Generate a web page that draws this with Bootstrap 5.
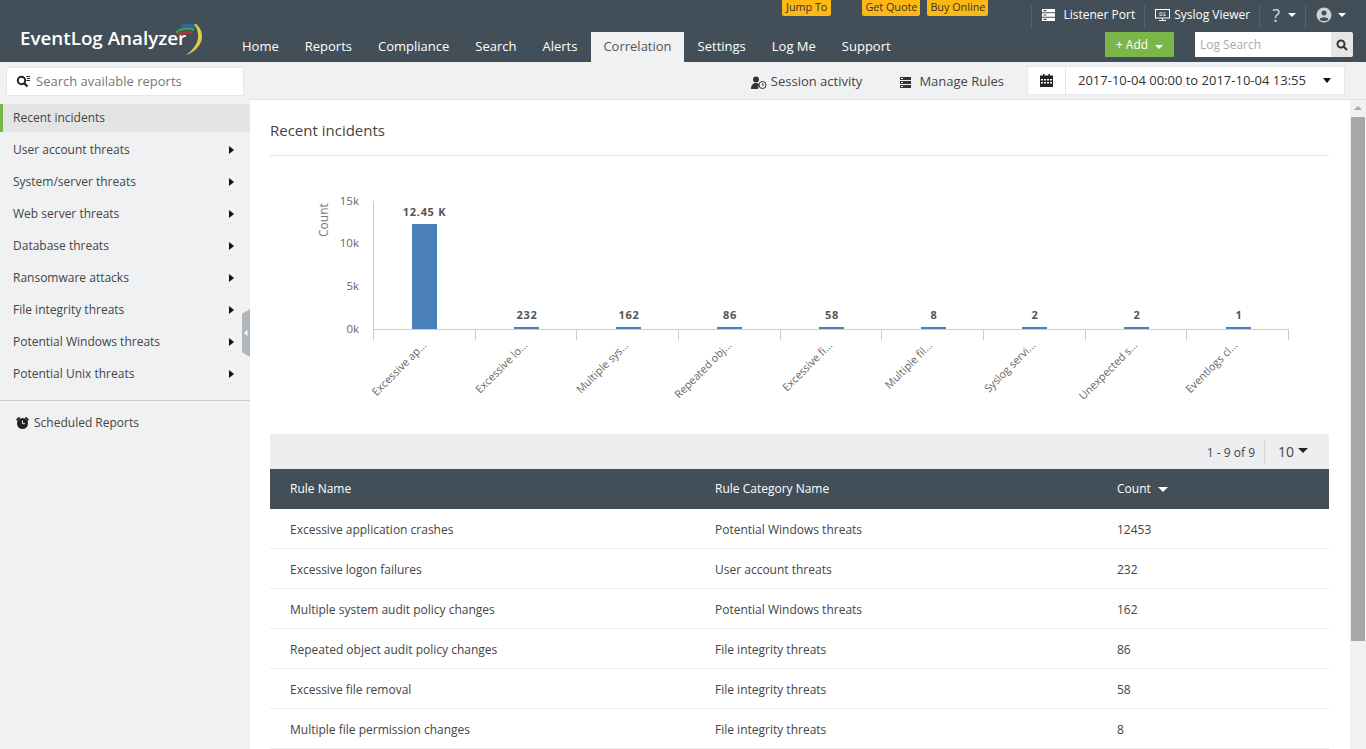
<!DOCTYPE html>
<html lang="en"><head><meta charset="utf-8"><title>EventLog Analyzer</title>
<link href="https://cdn.jsdelivr.net/npm/bootstrap@5.3.0/dist/css/bootstrap.min.css" rel="stylesheet">
<style>
html,body{height:100%;overflow:hidden}
body{font-family:"Open Sans","Noto Sans",sans-serif;font-size:12px;color:#444;background:#fff}
.top-head{height:62px;background:#434f58;color:#fff}
.brand-box{width:230px;padding:20px 0 0 20px;flex:none}
.brand-name{font-size:18.8px;font-weight:600;color:#fff;line-height:1;margin-top:9px;white-space:nowrap}
.brand-wrap{position:relative}
.brand-arc{position:absolute;left:148px;top:-5px}
.head-main{flex:1;min-width:0}
.head-top{height:32px;position:relative}
.tag-btn{background:#fdb813;color:#333;font-size:10.8px;line-height:14px;height:16px;padding:0 4px;border-radius:0 0 2px 2px;white-space:nowrap}
.tag-one{margin-left:552px}
.tag-two{margin-left:31px;padding:0 3px}
.tag-three{margin-left:7px;padding:0 3px}
.head-tools{margin-left:auto;padding:7px 20px 0 0;align-items:flex-start}
.tool-item{color:#fff;font-size:12px;line-height:16px;padding:0 9px 0 10px;white-space:nowrap;display:flex;align-items:center;gap:4px;height:16px}
.tool-sep{width:1px;height:24px;background:#56626b;margin-top:-2px}
.help-item{padding-left:12px;gap:8px}
.user-item{padding:0 0 0 10px;gap:6px}
.help-mark{font-size:18px;color:#d5d8da}
.head-nav{height:30px;padding:0;gap:2px}
.nav-tab{color:#fff;font-size:13px;padding:4px 12px 0;height:30px;line-height:20px;text-decoration:none;white-space:nowrap}
.nav-tab.current{background:#f0f1f2;color:#555}
.head-actions{margin-left:auto;padding:0 13px 0 0;align-items:flex-start;margin-top:0}
.add-btn{background:#7ab648;color:#fff;font-size:12px;height:25px;width:69px;padding:0;border:0;border-radius:1px;margin-right:21px;line-height:25px;margin-top:0}
.add-btn:hover{background:#7ab648;color:#fff}
.search-box{width:136px;height:25px;background:#fff;color:#aaa;font-size:12px;line-height:25px;padding-left:5px}
.search-icon{width:22px;height:25px;background:#e6e6e6;display:flex;align-items:center;justify-content:center;border-radius:0 2px 2px 0}
.caret-down{display:inline-block;width:0;height:0;border-left:4px solid transparent;border-right:4px solid transparent;border-top:4px solid currentColor}
.body-wrap{height:687px}
.side-col{width:250px;background:#f0f1f2;flex:none;position:relative}
.side-search{margin:5px 6px 0;height:29px;background:#fff;border:1px solid #e6e7e8;display:flex;align-items:center;padding-left:9px;gap:6px;color:#777;font-size:13px}
.side-list{margin-top:8px}
.side-row{height:32px;padding:0 13px;display:flex;align-items:center;justify-content:space-between;color:#444;font-size:12px;margin-bottom:0}
.side-first{height:28px;background:#e3e4e6;border-left:3px solid #7ab648;padding-left:10px;margin-bottom:2px}
.caret-right{width:0;height:0;border-top:4px solid transparent;border-bottom:4px solid transparent;border-left:5px solid #111;margin-right:3px}
.side-rule{border-top:1px solid #ccc;margin-top:10px}
.side-sched{display:flex;align-items:center;gap:5px;padding:13px 0 0 16px;font-size:12px;color:#444}
.side-handle{position:absolute;right:0;top:247px;width:8px;height:48px;background:#b0b6ba;clip-path:polygon(100% 0,100% 100%,0 90%,0 10%);display:flex;align-items:center;justify-content:center}
.main-col{flex:1;min-width:0;display:flex;flex-direction:column}
.sub-bar{height:38px;background:#f0f1f2;border-bottom:1px solid #e2e3e4;flex:none;padding-right:21px;color:#444;font-size:13px}
.sub-link{display:flex;align-items:center;gap:4px;white-space:nowrap;padding-top:3px}
.sub-gap{margin-left:38px}
.date-group{background:#fff;border:1px solid #e6e7e8;height:29px;display:flex;align-items:center;width:318px;margin-left:23px}
.date-icon{width:38px;height:100%;display:flex;align-items:center;justify-content:center;border-right:1px solid #e6e7e8}
.date-text{padding-left:12px;padding-top:1px;font-size:13px;flex:1;white-space:nowrap;color:#333}
.date-group .caret-down{color:#111;margin-right:13px;border-width:5px 4px 0 4px;border-left-color:transparent;border-right-color:transparent}
.content-wrap{flex:1;display:flex;min-height:0}
.page-pane{flex:1;min-width:0;padding:20px 21px 0 20px;overflow:hidden}
.page-title{font-size:15px;color:#444;height:36px;border-bottom:1px solid #e2e3e4;line-height:20px;font-weight:400;margin:0}
.chart-svg{display:block;margin-top:0}
.pager-bar{height:35px;background:#eceeef;margin-top:0;display:flex;justify-content:flex-end;align-items:center;font-size:12px;color:#444}
.pager-count{padding-top:3px}
.pager-size{border-left:1px solid #d4d6d8;height:24px;margin-left:9px;width:65px;padding-left:13px;display:flex;align-items:center;gap:4px;font-size:14px;color:#444}
.pager-size .caret-down{color:#222;border-width:5px 5px 0;margin-top:-2px}
.rule-table{margin:0;width:100%;table-layout:fixed;font-size:12px}
.rule-table th{background:#434f58;color:#fff;font-weight:400;height:40px;padding:0 20px;vertical-align:middle;border:0;box-shadow:none}
.rule-table th .caret-down{border-width:5px 5px 0;margin:0 0 1px 4px;vertical-align:middle}
.rule-table td{height:40px;padding:4px 20px 0;vertical-align:middle;color:#444;border-bottom:1px solid #ebecec;box-shadow:none}
.rule-table tbody tr:first-child td{height:39px;padding-top:3px}
.scroll-track{width:16px;flex:none;background:#f1f1f1;position:relative;display:flex;flex-direction:column;align-items:center}
.scroll-arrow{width:0;height:0;border-left:4px solid transparent;border-right:4px solid transparent;border-bottom:4px solid #a6a6a6;margin-top:6px}
.scroll-thumb{width:14px;height:524px;background:#a8a8a8;margin-top:7px}
.chart-svg text{font-family:"Open Sans","Noto Sans",sans-serif}
.screen-digits{font-family:"Liberation Mono",monospace;font-size:6px;fill:#fff}
</style></head><body>
<header class="top-head d-flex">
  <div class="brand-box"><div class="brand-wrap">
    <div class="brand-name">EventLog Analyzer</div>
    <svg class="brand-arc" width="40" height="34" viewBox="0 0 40 34" fill="none"><path d="M10 11C13 8 19 7.500 24 9" stroke="#b9323a" stroke-width="2.500"/><path d="M8 8.500C12 4.500 20 3.500 26 6" stroke="#3f9a4b" stroke-width="2.500"/><path d="M13 2.500C18 .5 24 1 28 3.500" stroke="#1f6fa8" stroke-width="2.500"/><path d="M28 0C34 5 36 13 32 20C29 25 24 29 18 31C25 26 31 19 30 10C29.500 6 28.500 3 26 0Z" fill="#e6c84a"/></svg>
  </div></div>
  <div class="head-main">
    <div class="head-top d-flex">
      <span class="tag-btn tag-one">Jump To</span><span class="tag-btn tag-two">Get Quote</span><span class="tag-btn tag-three">Buy Online</span>
      <div class="head-tools d-flex">
        <div class="tool-sep"></div>
        <div class="tool-item"><svg width="13" height="12" viewBox="0 0 13 12" fill="#fff"><path d="M0 0h13v3.300H0zM0 4.300h13v3.400H0zM0 8.700h13V12H0z"/><path d="M1.500 1h3v1.200h-3zM1.500 5.400h3v1.200h-3zM1.500 9.800h3V11h-3z" fill="#434f58"/></svg><span class="ms-1">Listener Port</span></div>
        <div class="tool-sep"></div>
        <div class="tool-item"><svg width="15" height="12" viewBox="0 0 15 12" fill="none" stroke="#fff"><rect x=".5" y=".5" width="14" height="8.500"/><path d="M4 11.500h7M7.500 9v2.500"/><text class="screen-digits" x="7.500" y="7" text-anchor="middle" stroke="none">01</text></svg><span>Syslog Viewer</span></div>
        <div class="tool-sep"></div>
        <div class="tool-item help-item"><span class="help-mark">?</span><span class="caret-down"></span></div>
        <div class="tool-sep"></div>
        <div class="tool-item user-item"><svg width="16" height="16" viewBox="0 0 16 16"><circle cx="8" cy="8" r="7.500" fill="#cfd3d6"/><circle cx="8" cy="6" r="2.500" fill="#434f58"/><path d="M3.500 12.500C4.500 9.500 11.500 9.500 12.500 12.500C10 14.500 6 14.500 3.500 12.500Z" fill="#434f58"/></svg><span class="caret-down"></span></div>
      </div>
    </div>
    <div class="d-flex">
      <nav class="head-nav d-flex">
        <a class="nav-tab" href="#">Home</a><a class="nav-tab" href="#">Reports</a><a class="nav-tab" href="#">Compliance</a><a class="nav-tab" href="#">Search</a><a class="nav-tab" href="#">Alerts</a><a class="nav-tab current" href="#">Correlation</a><a class="nav-tab" href="#">Settings</a><a class="nav-tab" href="#">Log Me</a><a class="nav-tab" href="#">Support</a>
      </nav>
      <div class="head-actions d-flex">
        <button class="btn add-btn">+ Add <span class="caret-down ms-1"></span></button>
        <div class="search-box">Log Search</div>
        <div class="search-icon"><svg width="12" height="12" viewBox="0 0 12 12" fill="none" stroke="#333" stroke-width="2"><circle cx="5" cy="5" r="3.500"/><path d="M7.500 7.500L11 11"/></svg></div>
      </div>
    </div>
  </div>
</header>
<div class="body-wrap d-flex">
  <aside class="side-col">
    <div class="side-search"><svg width="14" height="13" viewBox="0 0 14 13" fill="none" stroke="#222"><circle cx="5.500" cy="5.500" r="3.700" stroke-width="2"/><path d="M8 8l3.500 3.500" stroke-width="2.200"/><path d="M10.500 1.500H14M11 3.500h3M10.500 5.500H14" stroke-width="1"/></svg><span>Search available reports</span></div>
    <div class="side-list">
      <div class="side-row side-first">Recent incidents</div>
      <div class="side-row">User account threats<span class="caret-right"></span></div>
      <div class="side-row">System/server threats<span class="caret-right"></span></div>
      <div class="side-row">Web server threats<span class="caret-right"></span></div>
      <div class="side-row">Database threats<span class="caret-right"></span></div>
      <div class="side-row">Ransomware attacks<span class="caret-right"></span></div>
      <div class="side-row">File integrity threats<span class="caret-right"></span></div>
      <div class="side-row">Potential Windows threats<span class="caret-right"></span></div>
      <div class="side-row">Potential Unix threats<span class="caret-right"></span></div>
    </div>
    <div class="side-rule"></div>
    <div class="side-sched"><svg width="13" height="14" viewBox="0 0 13 14"><circle cx="6.500" cy="7.500" r="5.500" fill="#222"/><path d="M6.500 4.500v3.200h2.500" stroke="#f0f1f2" fill="none"/><path d="M0 3.500L3 .8l1.200 1.400L1.200 5zM13 3.500L10 .8 8.800 2.200l3 2.800z" fill="#222"/></svg><span>Scheduled Reports</span></div>
    <div class="side-handle"><svg width="4" height="6" viewBox="0 0 4 6"><path d="M3.500 0v6L0 3z" fill="#fff"/></svg></div>
  </aside>
  <div class="main-col">
    <div class="sub-bar d-flex align-items-center justify-content-end">
      <div class="sub-link"><svg width="16" height="13" viewBox="0 0 16 13"><circle cx="5" cy="3.500" r="3" fill="#333"/><path d="M0 13C0 8 3 7 5 7C6.500 7 7.500 7.500 8 8.500L7 13Z" fill="#333"/><circle cx="11.500" cy="9" r="3.500" fill="#f0f1f2" stroke="#333"/><path d="M11.500 7v2.200h1.800" stroke="#333" fill="none" stroke-width=".8"/></svg><span>Session activity</span></div>
      <div class="sub-link sub-gap"><svg width="11" height="11" viewBox="0 0 11 11" fill="#333"><path d="M0 0h11v3H0zM0 4h11v3H0zM0 8h11v3H0z"/><path d="M1 1h2v1H1zM1 5h2v1H1zM1 9h2v1H1z" fill="#f0f1f2"/></svg><span class="ms-1">Manage Rules</span></div>
      <div class="date-group">
        <div class="date-icon"><svg width="13" height="13" viewBox="0 0 13 13" fill="#222"><path d="M0 1.500h13V13H0z"/><path d="M3 0h1.500v2H3zM8.500 0H10v2H8.500z"/><path d="M1 5h2v1.500H1zM4 5h2v1.500H4zM7 5h2v1.500H7zM10 5h2v1.500h-2zM1 8h2v1.500H1zM4 8h2v1.500H4zM7 8h2v1.500H7zM10 8h2v1.500h-2z" fill="#fff"/></svg></div>
        <div class="date-text">2017-10-04 00:00 to 2017-10-04 13:55</div>
        <span class="caret-down"></span>
      </div>
    </div>
    <div class="content-wrap">
      <div class="page-pane">
        <h1 class="page-title">Recent incidents</h1>
        <svg class="chart-svg" width="1059" height="278" viewBox="270 156 1059 278">
          <g fill="#666" font-size="11.500" text-anchor="end"><text x="359" y="205">15k</text><text x="359" y="247">10k</text><text x="359" y="290">5k</text><text x="359" y="333">0k</text></g>
          <text transform="translate(328 237) rotate(-90)" fill="#777" font-size="12">Count</text>
          <path d="M373.500 201V340M373 329.500H1289M475.500 329v11M576.500 329v11M678.500 329v11M780.500 329v11M881.500 329v11M983.500 329v11M1085.500 329v11M1186.500 329v11M1288.500 329v11" stroke="#c6ced6" fill="none"/>
          <g fill="#4a80b8"><rect x="412" y="224" width="25" height="105"/><rect x="514" y="327" width="25" height="2"/><rect x="616" y="327" width="25" height="2"/><rect x="717" y="327" width="25" height="2"/><rect x="819" y="327" width="25" height="2"/><rect x="921" y="327" width="25" height="2"/><rect x="1022" y="327" width="25" height="2"/><rect x="1124" y="327" width="25" height="2"/><rect x="1226" y="327" width="25" height="2"/></g>
          <g fill="#555" font-size="11" font-weight="700" text-anchor="middle" letter-spacing=".7"><text x="424.500" y="216">12.45 K</text><text x="527" y="319">232</text><text x="629" y="319">162</text><text x="730" y="319">86</text><text x="832" y="319">58</text><text x="934" y="319">8</text><text x="1035" y="319">2</text><text x="1137" y="319">2</text><text x="1239" y="319">1</text></g>
          <g fill="#666" font-size="10.800" text-anchor="end">
            <text transform="translate(427 346) rotate(-45)">Excessive ap...</text>
            <text transform="translate(528 346) rotate(-45)">Excessive lo...</text>
            <text transform="translate(629 346) rotate(-45)">Multiple sys...</text>
            <text transform="translate(732 346) rotate(-45)">Repeated obj...</text>
            <text transform="translate(833 346) rotate(-45)">Excessive fi...</text>
            <text transform="translate(933 346) rotate(-45)">Multiple fil...</text>
            <text transform="translate(1036 346) rotate(-45)">Syslog servi...</text>
            <text transform="translate(1138 346) rotate(-45)">Unexpected s...</text>
            <text transform="translate(1238 346) rotate(-45)">Eventlogs cl...</text>
          </g>
        </svg>
        <div class="pager-bar"><span class="pager-count">1 - 9 of 9</span><div class="pager-size">10 <span class="caret-down"></span></div></div>
        <table class="table rule-table">
          <colgroup><col style="width:425px"><col style="width:402px"><col></colgroup>
          <thead><tr><th>Rule Name</th><th>Rule Category Name</th><th>Count <span class="caret-down"></span></th></tr></thead>
          <tbody>
            <tr><td>Excessive application crashes</td><td>Potential Windows threats</td><td>12453</td></tr>
            <tr><td>Excessive logon failures</td><td>User account threats</td><td>232</td></tr>
            <tr><td>Multiple system audit policy changes</td><td>Potential Windows threats</td><td>162</td></tr>
            <tr><td>Repeated object audit policy changes</td><td>File integrity threats</td><td>86</td></tr>
            <tr><td>Excessive file removal</td><td>File integrity threats</td><td>58</td></tr>
            <tr><td>Multiple file permission changes</td><td>File integrity threats</td><td>8</td></tr>
          </tbody>
        </table>
      </div>
      <div class="scroll-track"><div class="scroll-arrow"></div><div class="scroll-thumb"></div></div>
    </div>
  </div>
</div>
</body></html>
